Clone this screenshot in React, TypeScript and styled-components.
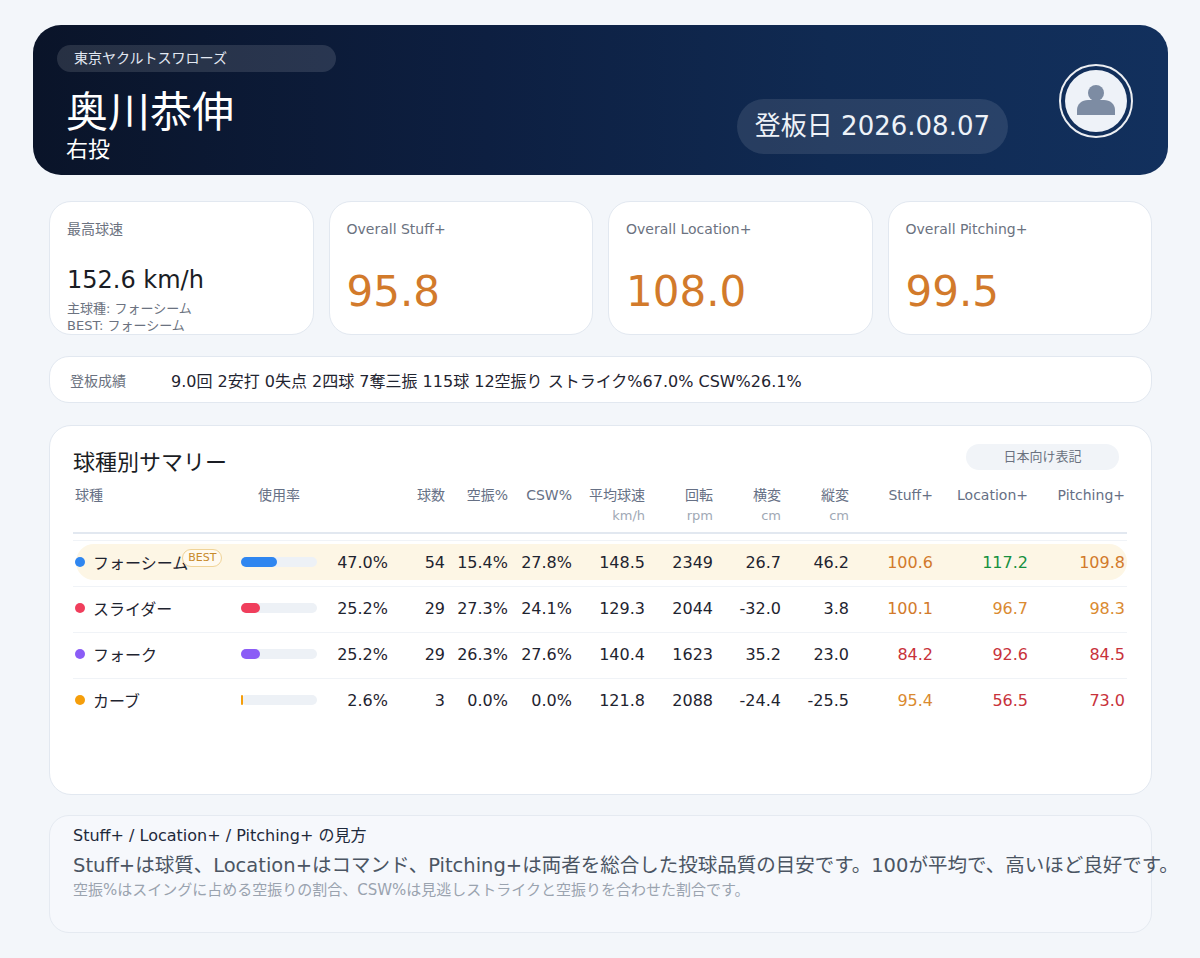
import React from 'react';
import styled, { createGlobalStyle } from 'styled-components';

const GlobalStyle = createGlobalStyle`
  body {
    margin: 0;
    background: #f3f6fa;
    font-family: "DejaVu Sans", "Noto Sans CJK JP", sans-serif;
    color: #1f2430;
  }
`;

const Page = styled.div`
  padding: 25px 32px 25px 33px;
`;

const Header = styled.header`
  height: 150px;
  box-sizing: border-box;
  border-radius: 28px;
  padding: 20px 35px 0 24px;
  display: flex;
  justify-content: space-between;
  background: linear-gradient(90deg, #0a1429 0%, #0d1f41 40%, #102a52 70%, #12305d 100%);
  color: #fff;
`;

const HeaderLeft = styled.div`
  display: flex;
  flex-direction: column;
`;

const TeamPill = styled.div`
  width: 279px;
  height: 27px;
  box-sizing: border-box;
  border-radius: 14px;
  padding-left: 17px;
  background: rgba(255, 255, 255, 0.12);
  color: #e3e9f3;
  font-size: 14px;
  line-height: 27px;
`;

const PlayerName = styled.div`
  margin-top: 19px;
  padding-left: 9px;
  font-size: 42px;
  line-height: 44px;
`;

const Hand = styled.div`
  margin-top: 2px;
  padding-left: 9px;
  font-size: 22px;
  line-height: 26px;
`;

const HeaderRight = styled.div`
  display: flex;
  align-items: flex-start;
  gap: 51px;
`;

const DatePill = styled.div`
  margin-top: 54px;
  height: 55px;
  padding: 0 18px;
  border-radius: 28px;
  background: rgba(255, 255, 255, 0.1);
  color: #eef2f8;
  font-size: 26px;
  line-height: 55px;
  white-space: nowrap;
`;

const Avatar = styled.div`
  margin-top: 19px;
  width: 74px;
  height: 74px;
  box-sizing: border-box;
  border-radius: 50%;
  border: 2px solid rgba(255, 255, 255, 0.92);
  padding: 4px;
`;

const AvatarInner = styled.div`
  width: 100%;
  height: 100%;
  border-radius: 50%;
  background: #eef2f8;
  display: flex;
  align-items: center;
  justify-content: center;
`;

const Content = styled.div`
  padding: 0 16px;
`;

const StatGrid = styled.div`
  margin-top: 26px;
  display: grid;
  grid-template-columns: repeat(4, 1fr);
  gap: 15px;
`;

const StatCard = styled.div`
  height: 134px;
  box-sizing: border-box;
  overflow: hidden;
  background: #fff;
  border: 1px solid #e2e8f0;
  border-radius: 22px;
  padding: 17px 17px 0;
`;

const StatLabel = styled.div`
  font-size: 14px;
  line-height: 20px;
  color: #6b7280;
`;

const SpeedValue = styled.div`
  margin-top: 25px;
  font-size: 24px;
  line-height: 32px;
  color: #1a1d24;
`;

const SubBlock = styled.div`
  margin-top: 4px;
`;

const SubLine = styled.div`
  font-size: 13px;
  line-height: 17px;
  color: #6b7280;
  white-space: nowrap;
`;

const BigValue = styled.div`
  margin-top: 27px;
  font-size: 42px;
  line-height: 52px;
  color: #d27a2b;
`;

const RecordBar = styled.div`
  margin-top: 21px;
  height: 47px;
  box-sizing: border-box;
  background: #fff;
  border: 1px solid #e2e8f0;
  border-radius: 20px;
  display: flex;
  align-items: center;
  padding-left: 20px;
`;

const RecordLabel = styled.span`
  width: 101px;
  font-size: 14px;
  color: #6b7280;
`;

const RecordText = styled.span`
  font-size: 16px;
  color: #1f2430;
  white-space: nowrap;
`;

const SummaryCard = styled.section`
  margin-top: 22px;
  height: 370px;
  box-sizing: border-box;
  background: #fff;
  border: 1px solid #e2e8f0;
  border-radius: 22px;
  padding: 18px 24px 0 23px;
`;

const TitleRow = styled.div`
  display: flex;
  justify-content: space-between;
  align-items: flex-start;
`;

const SectionTitle = styled.h2`
  margin: 5px 0 0;
  font-size: 22px;
  line-height: 28px;
  font-weight: 400;
  color: #1a1d24;
`;

const TogglePill = styled.div`
  width: 153px;
  height: 26px;
  margin-right: 8px;
  border-radius: 13px;
  background: #f1f4f8;
  color: #6b7280;
  font-size: 13px;
  line-height: 26px;
  text-align: center;
`;

const cols = '168px 76px 71px 57px 63px 64px 73px 68px 68px 68px 84px 95px 97px';

const HeadRow = styled.div`
  display: grid;
  grid-template-columns: ${cols};
  padding: 8px 0 7px;
  border-bottom: 2px solid #e2e8f0;
`;

const HeadCell = styled.div<{ $align?: 'left' | 'center' | 'right' }>`
  text-align: ${(p) => p.$align ?? 'right'};
  padding-left: ${(p) => (p.$align === 'left' ? '2px' : '0')};
`;

const HeadLabel = styled.div`
  font-size: 14px;
  line-height: 20px;
  color: #667085;
  white-space: nowrap;
`;

const HeadSub = styled.div`
  margin-top: 2px;
  font-size: 13px;
  line-height: 18px;
  color: #a0a8b5;
`;

const Rows = styled.div`
  margin-top: 6px;
`;

const Row = styled.div`
  padding: 3px 0 6px;
  border-top: 1px solid #f0f3f7;
`;

const RowInner = styled.div<{ $best?: boolean }>`
  margin-left: 3px;
  height: 36px;
  display: grid;
  grid-template-columns: 165px 76px 71px 57px 63px 64px 73px 68px 68px 68px 84px 95px 97px;
  align-items: center;
  border-radius: 18px;
  background: ${(p) => (p.$best ? '#fdf6e5' : 'transparent')};
`;

const NameCell = styled.div`
  display: flex;
  align-items: center;
  font-size: 16px;
  color: #1f2430;
  white-space: nowrap;
`;

const Dot = styled.span<{ $color: string }>`
  width: 10px;
  height: 10px;
  margin-left: -1px;
  margin-right: 8px;
  border-radius: 50%;
  background: ${(p) => p.$color};
`;

const BestBadge = styled.span`
  position: relative;
  top: -4px;
  margin-left: -6px;
  height: 18px;
  box-sizing: border-box;
  padding: 0 5px;
  border: 1px solid #f0d397;
  border-radius: 9px;
  background: #fffaf0;
  color: #c78a2c;
  font-size: 11px;
  line-height: 16px;
`;

const BarTrack = styled.div`
  width: 76px;
  height: 10px;
  border-radius: 5px;
  background: #edf1f6;
`;

const BarFill = styled.div<{ $color: string }>`
  height: 100%;
  border-radius: 5px;
  background: ${(p) => p.$color};
`;

const NumCell = styled.div<{ $color?: string }>`
  text-align: right;
  font-size: 16px;
  color: ${(p) => p.$color ?? '#1f2430'};
  white-space: nowrap;
`;

const Explain = styled.section`
  margin-top: 20px;
  height: 118px;
  box-sizing: border-box;
  background: #f6f8fc;
  border: 1px solid #e5eaf1;
  border-radius: 20px;
  padding: 9px 0 0 23px;
  white-space: nowrap;
`;

const ExplainTitle = styled.div`
  font-size: 16px;
  line-height: 22px;
  color: #1e293b;
`;

const ExplainText = styled.div`
  margin-top: 6px;
  font-size: 19.5px;
  line-height: 26px;
  color: #4b5563;
`;

const ExplainNote = styled.div`
  margin-top: 2px;
  font-size: 15px;
  line-height: 18px;
  color: #9aa3af;
`;

type Pitch = {
  name: string;
  color: string;
  best?: boolean;
  usage: number;
  count: number;
  whiff: string;
  csw: string;
  velo: string;
  spin: string;
  hb: string;
  vb: string;
  stuff: number;
  loc: number;
  pitching: number;
};

const pitches: Pitch[] = [
  { name: 'フォーシーム', color: '#2f86f0', best: true, usage: 47.0, count: 54, whiff: '15.4%', csw: '27.8%', velo: '148.5', spin: '2349', hb: '26.7', vb: '46.2', stuff: 100.6, loc: 117.2, pitching: 109.8 },
  { name: 'スライダー', color: '#f03e5c', usage: 25.2, count: 29, whiff: '27.3%', csw: '24.1%', velo: '129.3', spin: '2044', hb: '-32.0', vb: '3.8', stuff: 100.1, loc: 96.7, pitching: 98.3 },
  { name: 'フォーク', color: '#8b5cf6', usage: 25.2, count: 29, whiff: '26.3%', csw: '27.6%', velo: '140.4', spin: '1623', hb: '35.2', vb: '23.0', stuff: 84.2, loc: 92.6, pitching: 84.5 },
  { name: 'カーブ', color: '#f59e0b', usage: 2.6, count: 3, whiff: '0.0%', csw: '0.0%', velo: '121.8', spin: '2088', hb: '-24.4', vb: '-25.5', stuff: 95.4, loc: 56.5, pitching: 73.0 },
];

const plusColor = (v: number) => {
  if (v >= 110) return '#16903f';
  if (v >= 100) return '#d27a2b';
  if (v >= 95) return '#da8a31';
  return '#c8323b';
};

const heads: { label: string; sub?: string; align?: 'left' | 'center' | 'right' }[] = [
  { label: '球種', align: 'left' },
  { label: '使用率', align: 'center' },
  { label: '' },
  { label: '球数' },
  { label: '空振%' },
  { label: 'CSW%' },
  { label: '平均球速', sub: 'km/h' },
  { label: '回転', sub: 'rpm' },
  { label: '横変', sub: 'cm' },
  { label: '縦変', sub: 'cm' },
  { label: 'Stuff+' },
  { label: 'Location+' },
  { label: 'Pitching+' },
];

function PersonIcon() {
  return (
    <svg width="62" height="62" viewBox="0 0 62 62">
      <circle cx="31" cy="23" r="8" fill="#7d8ca3" />
      <path d="M12 45 V40 C12 34 17 30 23 30 H39 C45 30 50 34 50 40 V45 Z" fill="#7d8ca3" />
    </svg>
  );
}

export default function App() {
  return (
    <>
      <GlobalStyle />
      <Page>
        <Header>
          <HeaderLeft>
            <TeamPill>東京ヤクルトスワローズ</TeamPill>
            <PlayerName>奥川恭伸</PlayerName>
            <Hand>右投</Hand>
          </HeaderLeft>
          <HeaderRight>
            <DatePill>登板日 2026.08.07</DatePill>
            <Avatar>
              <AvatarInner>
                <PersonIcon />
              </AvatarInner>
            </Avatar>
          </HeaderRight>
        </Header>

        <Content>
          <StatGrid>
            <StatCard>
              <StatLabel>最高球速</StatLabel>
              <SpeedValue>152.6 km/h</SpeedValue>
              <SubBlock>
                <SubLine>主球種: フォーシーム</SubLine>
                <SubLine>BEST: フォーシーム</SubLine>
              </SubBlock>
            </StatCard>
            <StatCard>
              <StatLabel>Overall Stuff+</StatLabel>
              <BigValue>95.8</BigValue>
            </StatCard>
            <StatCard>
              <StatLabel>Overall Location+</StatLabel>
              <BigValue>108.0</BigValue>
            </StatCard>
            <StatCard>
              <StatLabel>Overall Pitching+</StatLabel>
              <BigValue>99.5</BigValue>
            </StatCard>
          </StatGrid>

          <RecordBar>
            <RecordLabel>登板成績</RecordLabel>
            <RecordText>9.0回 2安打 0失点 2四球 7奪三振 115球 12空振り ストライク%67.0% CSW%26.1%</RecordText>
          </RecordBar>

          <SummaryCard>
            <TitleRow>
              <SectionTitle>球種別サマリー</SectionTitle>
              <TogglePill>日本向け表記</TogglePill>
            </TitleRow>
            <HeadRow>
              {heads.map((h, i) => (
                <HeadCell key={i} $align={h.align}>
                  <HeadLabel>{h.label || '\u00a0'}</HeadLabel>
                  {h.sub && <HeadSub>{h.sub}</HeadSub>}
                </HeadCell>
              ))}
            </HeadRow>
            <Rows>
              {pitches.map((p) => (
                <Row key={p.name}>
                  <RowInner $best={p.best}>
                    <NameCell>
                      <Dot $color={p.color} />
                      {p.name}
                      {p.best && <BestBadge>BEST</BestBadge>}
                    </NameCell>
                    <BarTrack>
                      <BarFill $color={p.color} style={{ width: `${p.usage}%` }} />
                    </BarTrack>
                    <NumCell>{p.usage.toFixed(1)}%</NumCell>
                    <NumCell>{p.count}</NumCell>
                    <NumCell>{p.whiff}</NumCell>
                    <NumCell>{p.csw}</NumCell>
                    <NumCell>{p.velo}</NumCell>
                    <NumCell>{p.spin}</NumCell>
                    <NumCell>{p.hb}</NumCell>
                    <NumCell>{p.vb}</NumCell>
                    <NumCell $color={plusColor(p.stuff)}>{p.stuff.toFixed(1)}</NumCell>
                    <NumCell $color={plusColor(p.loc)}>{p.loc.toFixed(1)}</NumCell>
                    <NumCell $color={plusColor(p.pitching)}>{p.pitching.toFixed(1)}</NumCell>
                  </RowInner>
                </Row>
              ))}
            </Rows>
          </SummaryCard>

          <Explain>
            <ExplainTitle>Stuff+ / Location+ / Pitching+ の見方</ExplainTitle>
            <ExplainText>
              Stuff+は球質、Location+はコマンド、Pitching+は両者を総合した投球品質の目安です。100が平均で、高いほど良好です。
            </ExplainText>
            <ExplainNote>空振%はスイングに占める空振りの割合、CSW%は見逃しストライクと空振りを合わせた割合です。</ExplainNote>
          </Explain>
        </Content>
      </Page>
    </>
  );
}
